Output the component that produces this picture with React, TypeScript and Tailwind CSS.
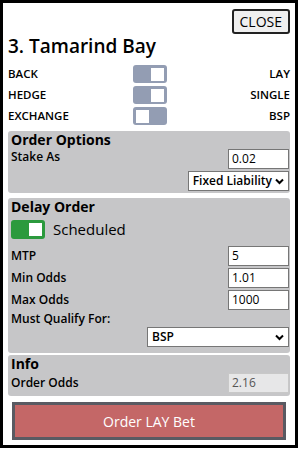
import React from "react";

function Toggle({ on, green }: { on: boolean; green?: boolean }) {
  return (
    <div
      className={`flex items-center rounded-[3px] px-[3px] ${
        green ? "h-[19px] w-[34px] bg-[#2b9a3d]" : "h-[18px] w-[34px] bg-[#939db3]"
      } ${on ? "justify-end" : "justify-start"}`}
    >
      <div className="h-[13px] w-[13px] bg-white" />
    </div>
  );
}

function Field({ value, disabled }: { value: string; disabled?: boolean }) {
  return (
    <div
      className={`flex h-[20px] w-[61px] items-center border px-[3px] text-[12px] ${
        disabled
          ? "border-[#c8c8c8] bg-[#e7e7e8] text-[#555]"
          : "border-[#767676] bg-white text-black"
      }`}
    >
      {value}
    </div>
  );
}

function Chevron() {
  return (
    <svg width="9" height="7" viewBox="0 0 9 7" className="shrink-0">
      <path d="M1 1.5 L4.5 5 L8 1.5" fill="none" stroke="black" strokeWidth="2" />
    </svg>
  );
}

const modes = [
  { left: "BACK", right: "LAY", on: true },
  { left: "HEDGE", right: "SINGLE", on: true },
  { left: "EXCHANGE", right: "BSP", on: false },
];

export default function App() {
  return (
    <div className="h-[450px] w-[300px] bg-white font-['Open_Sans',sans-serif] text-black">
      <div className="flex h-[448px] w-[298px] flex-col border-[3px] border-black px-[5px] pt-[6px]">
        <div className="flex justify-end">
          <button className="h-[25px] rounded-[3px] border-2 border-[#222] bg-[#efefef] px-[6px] text-[14px] leading-none">
            CLOSE
          </button>
        </div>
        <h1 className="text-[19px] font-semibold leading-[24px]">3. Tamarind Bay</h1>

        <div className="mt-[7px] flex flex-col gap-[3px]">
          {modes.map((m) => (
            <div key={m.left} className="grid grid-cols-[125px_1fr] items-center text-[11.5px] font-semibold">
              <span>{m.left}</span>
              <div className="flex items-center justify-between">
                <Toggle on={m.on} />
                <span>{m.right}</span>
              </div>
            </div>
          ))}
        </div>

        <section className="mt-[6px] rounded-[3px] bg-[#c6c6c8] pb-[2px] pl-[3px] pr-[1px] pt-[1px]">
          <h2 className="text-[14px] font-bold leading-[16px]">Order Options</h2>
          <div className="mt-[1px] flex items-start justify-between">
            <span className="text-[12px] font-semibold leading-[16px]">Stake As</span>
            <Field value="0.02" />
          </div>
          <div className="mt-[2px] flex justify-end">
            <div className="flex h-[20px] items-center gap-[3px] border border-[#767676] bg-white px-[4px] text-[12px] font-semibold">
              Fixed Liability
              <Chevron />
            </div>
          </div>
        </section>

        <section className="mt-[5px] rounded-[3px] bg-[#c6c6c8] pb-[6px] pl-[3px] pr-[1px] pt-[1px]">
          <h2 className="text-[14px] font-bold leading-[16px]">Delay Order</h2>
          <div className="mt-[5px] flex items-center gap-[8px]">
            <Toggle on green />
            <span className="text-[15px] leading-[19px]">Scheduled</span>
          </div>
          <div className="mt-[7px] flex flex-col gap-[2px]">
            {[
              ["MTP", "5"],
              ["Min Odds", "1.01"],
              ["Max Odds", "1000"],
            ].map(([l, v]) => (
              <div key={l} className="flex items-center justify-between">
                <span className="text-[12px] font-semibold">{l}</span>
                <Field value={v} />
              </div>
            ))}
          </div>
          <div className="mt-[1px] text-[12px] font-semibold leading-[16px]">Must Qualify For:</div>
          <div className="flex justify-end">
            <div className="flex h-[20px] w-[142px] items-center justify-between border border-[#767676] bg-white px-[4px] text-[12px] font-semibold">
              BSP
              <Chevron />
            </div>
          </div>
        </section>

        <section className="mt-[2px] rounded-[3px] bg-[#c6c6c8] pb-[3px] pl-[3px] pr-[1px] pt-[1px]">
          <h2 className="text-[14px] font-bold leading-[16px]">Info</h2>
          <div className="mt-[1px] flex items-center justify-between">
            <span className="text-[12px] font-semibold">Order Odds</span>
            <Field value="2.16" disabled />
          </div>
        </section>

        <button className="mx-[4px] mt-[6px] h-[38px] shrink-0 border-[3px] border-[#5a5a62] bg-[#c46767] text-[14px] text-white">
          Order LAY Bet
        </button>
      </div>
    </div>
  );
}
